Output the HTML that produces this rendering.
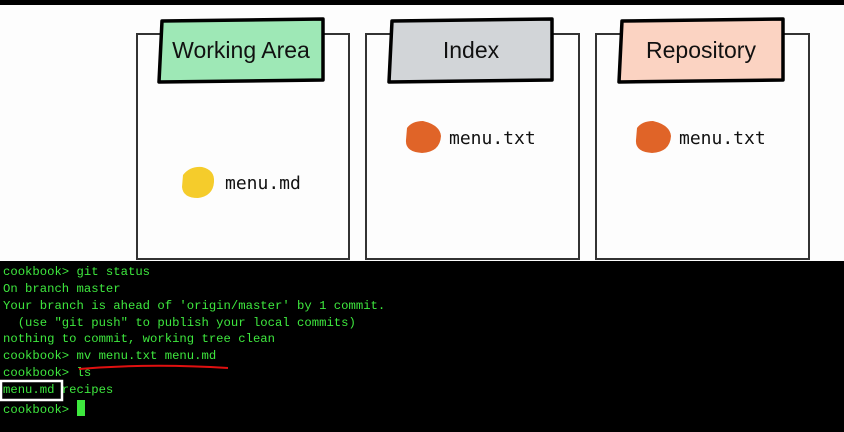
<!DOCTYPE html>
<html><head><meta charset="utf-8"><style>
body{margin:0;width:844px;height:432px;overflow:hidden;background:#000;}
#top{position:absolute;left:0;top:0;width:844px;height:261px;}
#term{position:absolute;left:0;top:262px;width:844px;height:170px;background:#000;font-family:"Liberation Mono","DejaVu Sans Mono",monospace;font-size:12.25px;color:#3ee83e;}
#term div{position:absolute;left:3px;white-space:pre;}
</style></head><body>
<svg id="top" width="844" height="261" viewBox="0 0 844 261">
<rect x="0" y="0" width="844" height="261" fill="#fdfdfd"/>
<rect x="0" y="0" width="844" height="5" fill="#000"/>
<g fill="none" stroke="#333" stroke-width="2">
<rect x="137" y="34" width="212" height="225"/>
<rect x="366" y="34" width="213" height="225"/>
<rect x="596" y="34" width="213" height="225"/>
</g>
<g stroke="#000" stroke-width="3.5" stroke-linejoin="round">
<path d="M162 21 L323 19 L323 80 L159 82 Z" fill="#9ee8b6"/>
<path d="M392 21 L552 19 L552 80 L389 82 Z" fill="#d2d5d8"/>
<path d="M622 21 L783 19 L783 80 L619 82 Z" fill="#fbd3c2"/>
</g>
<g font-family="Liberation Sans, sans-serif" font-size="23" fill="#111" text-anchor="middle">
<text x="241" y="58">Working Area</text>
<text x="471" y="58">Index</text>
<text x="701" y="58">Repository</text>
</g>
<path d="M183 175 Q190 166 202 167 Q215 170 214 182 Q213 196 198 198 Q183 198 182 187 Z" fill="#f5cc2b"/>
<path d="M407 128 Q412 121 423 121 Q440 125 441 136 Q440 152 422 153 Q405 152 406 140 Z" fill="#e06428"/>
<path d="M637 128 Q642 121 653 121 Q670 125 671 136 Q670 152 652 153 Q635 152 636 140 Z" fill="#e06428"/>
<g font-family="DejaVu Sans Mono, monospace" font-size="18" fill="#111">
<text x="225" y="189">menu.md</text>
<text x="449" y="144">menu.txt</text>
<text x="679" y="144">menu.txt</text>
</g>
</svg>
<div id="term">
<div style="top:3px">cookbook&gt; git status</div>
<div style="top:20px">On branch master</div>
<div style="top:37px">Your branch is ahead of 'origin/master' by 1 commit.</div>
<div style="top:54px">  (use "git push" to publish your local commits)</div>
<div style="top:70px">nothing to commit, working tree clean</div>
<div style="top:87px">cookbook&gt; mv menu.txt menu.md</div>
<div style="top:104px">cookbook&gt; ls</div>
<div style="top:121px">menu.md recipes</div>
<div style="top:138px">cookbook&gt; <span style="background:#3ee83e;display:inline-block;width:8px;height:16px;vertical-align:-3px"></span></div>
<svg style="position:absolute;left:0;top:0" width="844" height="170">
<path d="M79 107 Q150 101 228 106" stroke="#e01010" stroke-width="2" fill="none"/>
<rect x="1" y="119" width="61" height="19" fill="none" stroke="#fff" stroke-width="2.5"/>
</svg>
</div>
</body></html>
